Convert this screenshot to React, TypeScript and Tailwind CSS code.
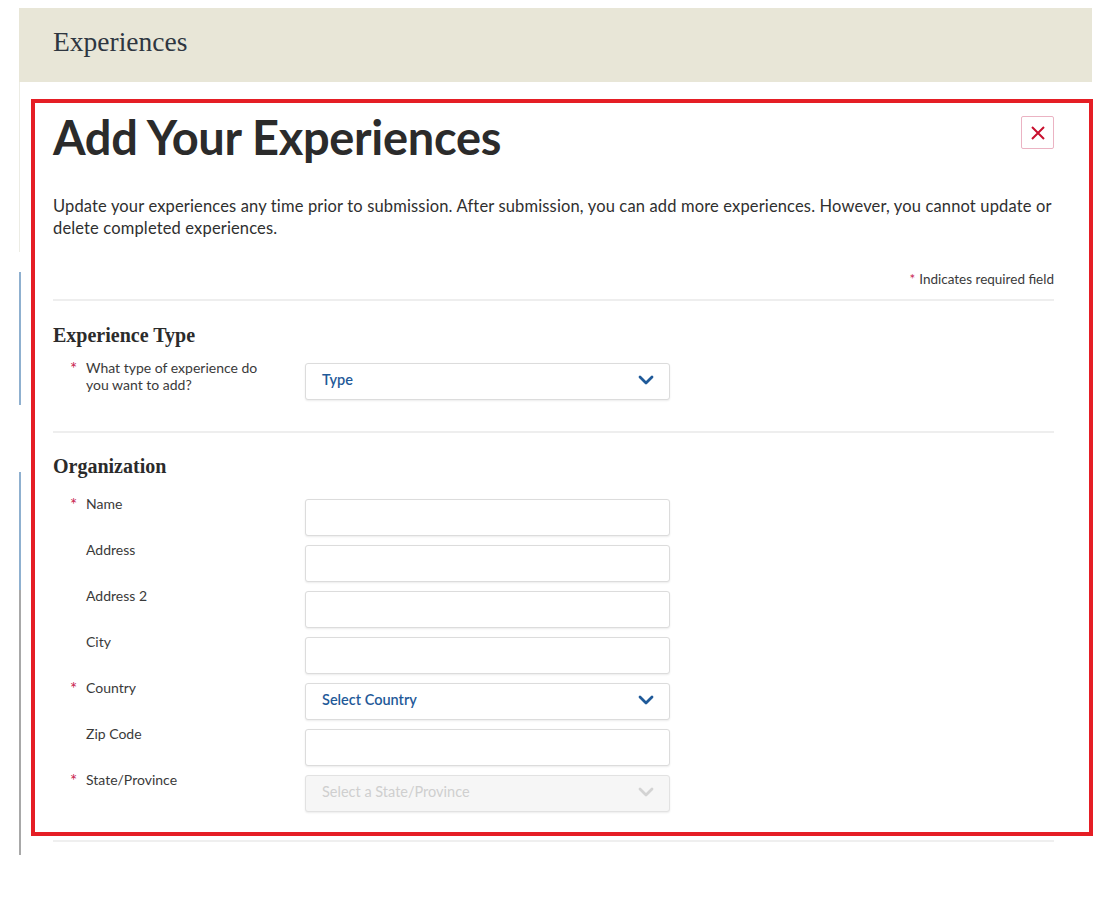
import React from "react";

const Star = () => <span className="text-[#c8244f] text-[17px] leading-none w-[16px] inline-block pt-[1px]">*</span>;

const Chevron = ({ color }: { color: string }) => (
  <svg width="16" height="10" viewBox="0 0 16 10" fill="none">
    <path d="M2 2 L8 8 L14 2" stroke={color} strokeWidth="2.8" strokeLinecap="round" strokeLinejoin="round" />
  </svg>
);

const TextInput = () => (
  <div className="w-[365px] h-[37px] rounded-[3px] border border-[#dcdcdc] bg-white shadow-[0_1px_2px_rgba(0,0,0,0.08)]" />
);

const Select = ({ text, disabled }: { text: string; disabled?: boolean }) => (
  <div
    className={
      "w-[365px] h-[37px] rounded-[3px] border flex items-center justify-between pl-[16px] pr-[15px] pb-[3px] shadow-[0_1px_2px_rgba(0,0,0,0.08)] " +
      (disabled ? "bg-[#f6f6f6] border-[#e2e2e2]" : "bg-white border-[#dcdcdc]")
    }
  >
    <span className={"text-[14.5px] " + (disabled ? "text-[#cfcfcf]" : "text-[#1f5a99] font-semibold")}>{text}</span>
    <Chevron color={disabled ? "#d3d3d3" : "#1f5a99"} />
  </div>
);

const Row = ({ label, required, children }: { label: React.ReactNode; required?: boolean; children: React.ReactNode }) => (
  <div className="flex items-start">
    <div className="w-[252px] flex items-start pl-[17px] -mt-[4px]">
      {required ? <Star /> : <span className="w-[16px] inline-block" />}
      <span className="text-[14px] text-[#3a3a3a] leading-[17px]">{label}</span>
    </div>
    {children}
  </div>
);

export default function App() {
  return (
    <div className="w-[1115px] h-[899px] bg-white" style={{ fontFamily: "Lato, 'Open Sans', sans-serif" }}>
      <div className="pt-[8px] pl-[19px] w-[1092px]">
        <div className="h-[74px] bg-[#e8e6d7] flex items-center pl-[34px] pb-[6px]">
          <span className="text-[27.5px] text-[#2e3640]" style={{ fontFamily: "'Liberation Serif', serif" }}>Experiences</span>
        </div>
        <div className="relative h-[778px] pt-[17px]">
          <div className="absolute left-0 top-0 w-px h-[170px] bg-[#ecece4]" />
          <div className="absolute left-0 top-[190px] w-[2px] h-[133px] bg-[#8fb0cf]" />
          <div className="absolute left-0 top-[390px] w-[2px] h-[118px] bg-[#8fb0cf]" />
          <div className="absolute left-0 top-[508px] w-[2px] h-[265px] bg-[#a8a8a8]" />
          <div className="ml-[12px] w-[1062px] h-[737px] border-[4px] border-[#e51e25] pl-[18px] pr-[35px]">
            <div className="flex justify-between items-start pt-[6px]">
              <h1 className="text-[47px] font-bold text-[#2b2b2b] tracking-[-0.3px] leading-[56px]">Add Your Experiences</h1>
              <button className="mt-[7px] w-[33px] h-[33px] border border-[#ebb3c3] rounded-[2px] flex items-center justify-center">
                <svg width="16" height="16" viewBox="0 0 16 16">
                  <path d="M2 2 L14 14 M14 2 L2 14" stroke="#c8102e" strokeWidth="2" />
                </svg>
              </button>
            </div>
            <p className="mt-[30px] text-[16.5px] tracking-[0.15px] leading-[22px] text-[#2f2f2f]">
              Update your experiences any time prior to submission. After submission, you can add more experiences. However, you cannot update or delete completed experiences.
            </p>
            <div className="mt-[30px] flex justify-end items-center text-[13.5px] text-[#3a3a3a]">
              <span className="text-[#c8244f] mr-[4px]">*</span>Indicates required field
            </div>
            <div className="mt-[10px] h-[2px] bg-[#eeeeee]" />
            <h2 className="mt-[21px] text-[20px] font-bold text-[#2b2b2b] leading-[26px]" style={{ fontFamily: "'Liberation Serif', serif" }}>Experience Type</h2>
            <div className="mt-[15px]">
              <Row required label={<>What type of experience do<br />you want to add?</>}>
                <Select text="Type" />
              </Row>
            </div>
            <div className="mt-[31px] h-[2px] bg-[#eeeeee]" />
            <h2 className="mt-[20px] text-[20px] font-bold text-[#2b2b2b] leading-[26px]" style={{ fontFamily: "'Liberation Serif', serif" }}>Organization</h2>
            <div className="mt-[20px] flex flex-col gap-[9px]">
              <Row required label="Name"><TextInput /></Row>
              <Row label="Address"><TextInput /></Row>
              <Row label="Address 2"><TextInput /></Row>
              <Row label="City"><TextInput /></Row>
              <Row required label="Country"><Select text="Select Country" /></Row>
              <Row label="Zip Code"><TextInput /></Row>
              <Row required label="State/Province"><Select text="Select a State/Province" disabled /></Row>
            </div>
          </div>
          <div className="ml-[34px] mt-[4px] w-[1001px] h-[2px] bg-[#efefef]" />
        </div>
      </div>
    </div>
  );
}
